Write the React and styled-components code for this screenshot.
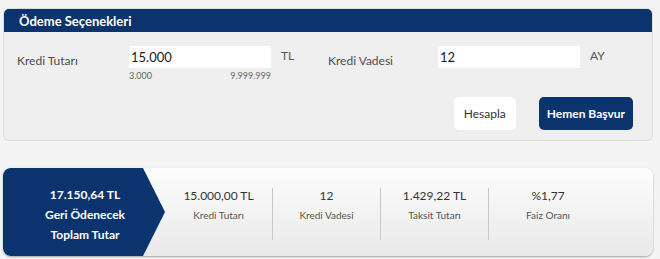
import React from "react";
import styled, { createGlobalStyle } from "styled-components";

const Global = createGlobalStyle`
  html, body {
    margin: 0;
    padding: 0;
    background: #f5f4f4;
    font-family: "Lato", "Open Sans", Arial, sans-serif;
  }
`;

const Page = styled.div`
  width: 660px;
  height: 259px;
  padding: 8px 7px 0 3px;
  box-sizing: border-box;
  display: flex;
  flex-direction: column;
  gap: 27px;
`;

const Panel = styled.section`
  border: 1px solid #dcdcdc;
  border-radius: 6px;
  background: #efefef;
  overflow: hidden;
`;

const PanelHeader = styled.h2`
  margin: 0;
  height: 23px;
  padding: 0 15px;
  display: flex;
  align-items: center;
  background: #0b336d;
  color: #fff;
  font-size: 13px;
  font-weight: 700;
`;

const PanelBody = styled.div`
  padding: 14px 19px 10px 13px;
  display: flex;
  flex-direction: column;
  gap: 16px;
`;

const Fields = styled.div`
  display: flex;
`;

const Field = styled.div`
  display: flex;
  align-items: flex-start;
  width: ${(p) => p.width}px;
`;

const Label = styled.label`
  width: ${(p) => p.width || 112}px;
  padding-top: 7px;
  color: #4c4c4c;
  font-size: 12px;
`;

const InputWrap = styled.div`
  display: flex;
  flex-direction: column;
  width: 142px;
`;

const Input = styled.input`
  width: 142px;
  height: 22px;
  box-sizing: border-box;
  border: none;
  background: #fff;
  padding: 0 2px;
  font-family: inherit;
  font-size: 13px;
  color: #1a1a1a;
  outline: none;
`;

const Range = styled.div`
  display: flex;
  justify-content: space-between;
  margin-top: 2px;
  color: #666;
  font-size: 9px;
`;

const Unit = styled.span`
  margin-left: 10px;
  padding-top: 2px;
  color: #555;
  font-size: 12px;
`;

const Actions = styled.div`
  display: flex;
  justify-content: flex-end;
  gap: 23px;
`;

const Button = styled.button`
  height: 33px;
  padding: 0 ${(p) => (p.primary ? 8 : 10)}px;
  border: none;
  border-radius: 5px;
  background: ${(p) => (p.primary ? "#0b336d" : "#fff")};
  color: ${(p) => (p.primary ? "#fff" : "#333")};
  font-family: inherit;
  font-size: 12px;
  font-weight: ${(p) => (p.primary ? 700 : 400)};
  cursor: pointer;
`;

const Summary = styled.div`
  height: 88px;
  display: flex;
  border-radius: 8px;
  background: linear-gradient(#fdfdfd, #e9e9e9);
  box-shadow: 0 1px 2px rgba(0, 0, 0, 0.35);
`;

const Total = styled.div`
  position: relative;
  flex: none;
  width: 140px;
  box-sizing: border-box;
  padding: 4px 0 0 24px;
  display: flex;
  flex-direction: column;
  align-items: center;
  justify-content: center;
  gap: 5px;
  background: #0b336d;
  border-radius: 8px 0 0 8px;
  color: #fff;
  font-size: 12px;
  font-weight: 700;
  white-space: nowrap;

  &::after {
    content: "";
    position: absolute;
    top: 0;
    right: -22px;
    border-style: solid;
    border-width: 44px 0 44px 22px;
    border-color: transparent transparent transparent #0b336d;
  }
`;

const Items = styled.div`
  display: flex;
  align-items: center;
  padding: 4px 0 0 22px;
`;

const Item = styled.div`
  width: ${(p) => (p.last ? 118 : 108)}px;
  height: 52px;
  display: flex;
  flex-direction: column;
  align-items: center;
  box-sizing: border-box;
  gap: 6px;
  border-right: ${(p) => (p.last ? "none" : "1px solid #c8c8c8")};
`;

const Value = styled.span`
  color: #333;
  font-size: 12px;
`;

const Caption = styled.span`
  color: #555;
  font-size: 10px;
`;

const items = [
  ["15.000,00 TL", "Kredi Tutarı"],
  ["12", "Kredi Vadesi"],
  ["1.429,22 TL", "Taksit Tutarı"],
  ["%1,77", "Faiz Oranı"],
];

export default function App() {
  return (
    <>
      <Global />
      <Page>
        <Panel>
          <PanelHeader>Ödeme Seçenekleri</PanelHeader>
          <PanelBody>
            <Fields>
              <Field width={311}>
                <Label>Kredi Tutarı</Label>
                <InputWrap>
                  <Input defaultValue="15.000" />
                  <Range>
                    <span>3.000</span>
                    <span>9.999.999</span>
                  </Range>
                </InputWrap>
                <Unit>TL</Unit>
              </Field>
              <Field width={300}>
                <Label width={110}>Kredi Vadesi</Label>
                <InputWrap>
                  <Input defaultValue="12" />
                </InputWrap>
                <Unit>AY</Unit>
              </Field>
            </Fields>
            <Actions>
              <Button>Hesapla</Button>
              <Button primary>Hemen Başvur</Button>
            </Actions>
          </PanelBody>
        </Panel>
        <Summary>
          <Total>
            <span>17.150,64 TL</span>
            <span>Geri Ödenecek</span>
            <span>Toplam Tutar</span>
          </Total>
          <Items>
            {items.map(([v, c], i) => (
              <Item key={c} last={i === items.length - 1}>
                <Value>{v}</Value>
                <Caption>{c}</Caption>
              </Item>
            ))}
          </Items>
        </Summary>
      </Page>
    </>
  );
}
